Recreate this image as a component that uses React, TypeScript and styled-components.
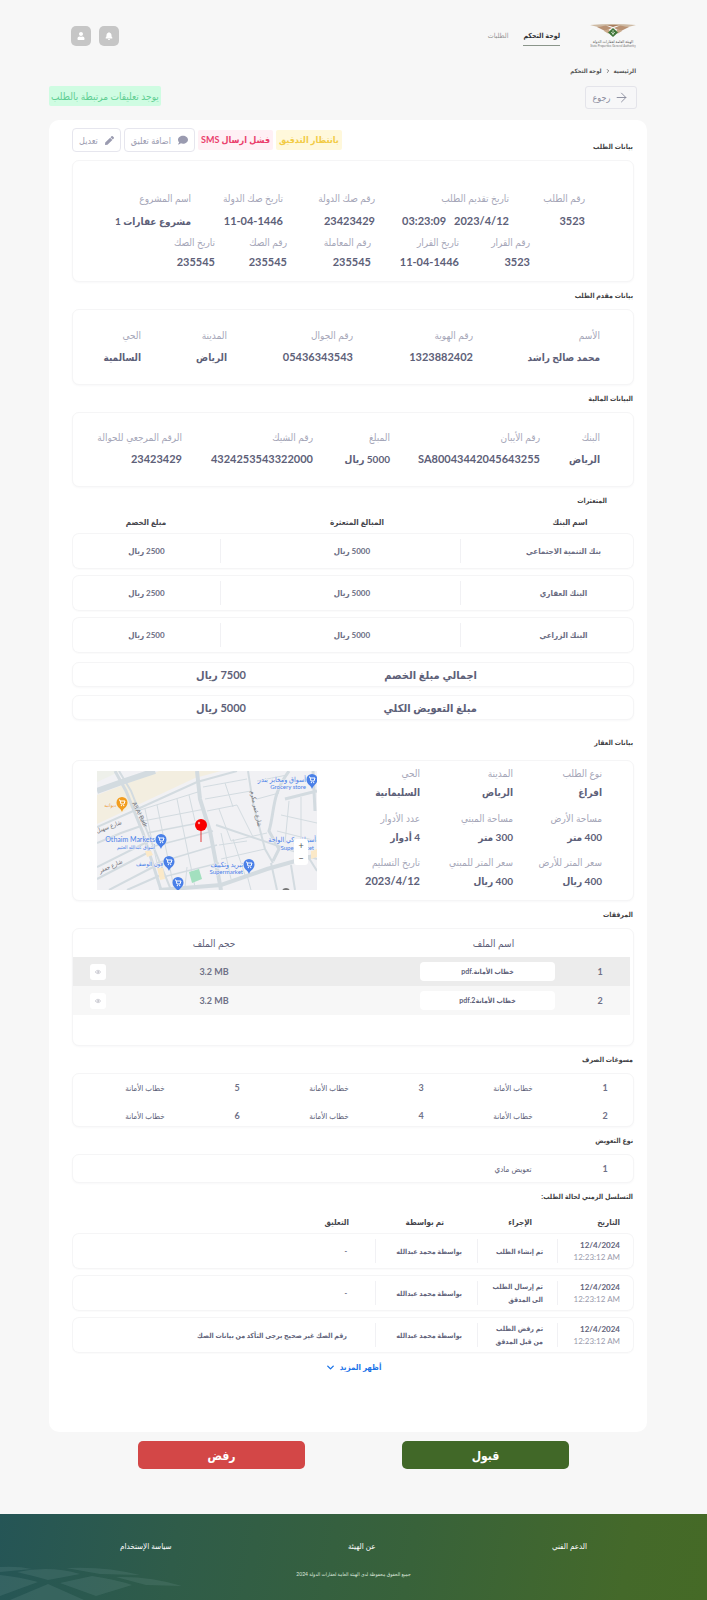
import React from "react";
import styled, { createGlobalStyle } from "styled-components";
import { FaPen, FaComment, FaBell, FaUser } from "react-icons/fa";
import { ArrowRight, ChevronDown, ChevronRight, Eye } from "lucide-react";

const Global = createGlobalStyle`
  *, *::before, *::after { box-sizing: border-box; }
  body {
    margin: 0;
    background: #f7f7f7;
    color: #5d6078;
    font-family: Lato, "DejaVu Sans Condensed", "DejaVu Sans", sans-serif;
    font-size: 9px;
    line-height: 12px;
  }
  button { font-family: inherit; cursor: pointer; }
  a { color: inherit; text-decoration: none; }
  h2, p, dl, dd, figure { margin: 0; padding: 0; }
`;

const Header = styled.header`
  display: flex;
  align-items: center;
  padding: 23px 71px 0;
  height: 48px;
`;

const LogoLink = styled.a`
  display: block;
  width: 46px;
  height: 24px;
`;

const Nav = styled.nav`
  display: flex;
  gap: 15px;
  margin-inline-start: 30px;
  margin-inline-end: auto;
  align-items: flex-start;
`;

const NavLink = styled.a<{ $active?: boolean }>`
  font-size: 7px;
  line-height: 12px;
  padding: 3px 0 4px;
  font-weight: ${(p) => (p.$active ? 700 : 400)};
  color: ${(p) => (p.$active ? "#2f3236" : "#929292")};
  border-bottom: 1px solid ${(p) => (p.$active ? "#8a958a" : "transparent")};
`;

const HeaderIcons = styled.div`
  display: flex;
  gap: 8px;
`;

const IconButton = styled.button`
  display: grid;
  place-items: center;
  width: 20px;
  height: 20px;
  padding: 0;
  border: 0;
  border-radius: 5px;
  background: #c6c6c6;
  color: #fff;
`;

const Breadcrumb = styled.nav`
  display: flex;
  align-items: center;
  gap: 3px;
  margin-top: 17px;
  padding: 0 71px;
  font-size: 6px;
  line-height: 12px;
  font-weight: 700;
  color: #555;
`;

const Toolbar = styled.div`
  display: flex;
  justify-content: space-between;
  align-items: flex-start;
  margin: 9px 70px 11px 49px;
`;

const BackButton = styled.button`
  display: flex;
  align-items: center;
  justify-content: center;
  gap: 4px;
  width: 52px;
  height: 23px;
  padding: 0;
  border: 1px solid #e4e4ea;
  border-radius: 3px;
  background: #f7f7f8;
  color: #8b8d9e;
  font-size: 9px;
`;

const Notice = styled.p`
  padding: 0 2px;
  border-radius: 2px;
  background: #cffce2;
  color: #5fce92;
  font-size: 10px;
  line-height: 20px;
`;

const Panel = styled.main`
  margin: 0 60px 0 49px;
  padding: 8px 13px 59px 23px;
  border-radius: 10px;
  background: #fff;
`;

const PanelHead = styled.div`
  display: flex;
  justify-content: space-between;
  align-items: flex-end;
  margin-bottom: 8px;
`;

const Chips = styled.div`
  display: flex;
  align-items: center;
  gap: 3px;
`;

const Chip = styled.span<{ $tone: "amber" | "pink" }>`
  padding: 0 3px;
  border-radius: 2px;
  font-size: 9px;
  font-weight: 700;
  line-height: 20px;
  background: ${(p) => (p.$tone === "amber" ? "#fff8db" : "#fff0f5")};
  color: ${(p) => (p.$tone === "amber" ? "#f2cb45" : "#ea3f6c")};
`;

const OutlineButton = styled.button`
  display: flex;
  align-items: center;
  gap: 7px;
  height: 24px;
  padding: 0 6px;
  border: 1px solid #e6e6ee;
  border-radius: 4px;
  background: #fff;
  color: #9a9bb0;
  font-size: 9px;
`;

const SectionTitle = styled.h2<{ $top?: number; $bottom?: number; $inset?: number }>`
  margin-top: ${(p) => p.$top ?? 7}px;
  margin-bottom: ${(p) => p.$bottom ?? 8}px;
  padding-inline-start: ${(p) => p.$inset ?? 1}px;
  font-size: 7px;
  line-height: 12px;
  font-weight: 700;
  color: #3f3f44;
`;

const Card = styled.section`
  border: 1px solid #f5f5f6;
  border-radius: 7px;
  background: #fff;
  box-shadow: 0 1px 2px rgba(30, 30, 60, 0.03);
  overflow: hidden;
`;

const FieldCard = styled(Card)<{ $pad: string }>`
  display: grid;
  row-gap: 5px;
  padding: ${(p) => p.$pad};
`;

const FieldRow = styled.dl<{ $cols: string; $inset?: number }>`
  display: grid;
  grid-template-columns: ${(p) => p.$cols};
  padding-inline-start: ${(p) => p.$inset ?? 0}px;
`;

const FieldLabel = styled.dt`
  font-size: 10px;
  line-height: 16px;
  color: #a5a6b8;
  white-space: nowrap;
`;

const FieldValue = styled.dd<{ $gap: number; $arabic: boolean }>`
  && { margin-top: ${(p) => p.$gap}px; }
  font-size: ${(p) => (p.$arabic ? 10 : 11)}px;
  line-height: 16px;
  font-weight: 700;
  white-space: nowrap;
`;

const RowTable = styled.table`
  width: 100%;
  margin-bottom: -5px;
  border-collapse: separate;
  border-spacing: 0 6px;
  table-layout: fixed;

  th {
    padding: 5px 0 0;
    font-size: 8px;
    line-height: 10px;
    font-weight: 700;
    color: #43434a;
  }
  td {
    height: 36px;
    padding-top: 0;
    padding-bottom: 0;
    border: 0 solid #f5f5f6;
    border-width: 1px 0;
    box-shadow: 0 1px 1px rgba(30, 30, 60, 0.02);
    background: linear-gradient(#f1f1f4, #f1f1f4) left center / 1px 24px no-repeat;
  }
  td:first-child { border-right-width: 1px; border-radius: 0 7px 7px 0; }
  td:last-child { border-left-width: 1px; border-radius: 7px 0 0 7px; background: none; }
`;

const BankTable = styled(RowTable)`
  th, td { text-align: center; padding-right: 0; padding-left: 0; }
  th:nth-child(1) { padding-left: 46px; }
  td:nth-child(1) { padding-left: 34px; }
  th:nth-child(2) { padding-left: 34px; }
  td:nth-child(2) { padding-left: 24px; }
  td { font-size: 8px; font-weight: 700; color: #6a6c82; }
`;

const TotalRow = styled(Card)`
  display: grid;
  grid-template-columns: 156fr 231fr 173fr;
  margin-top: 8px;
  font-size: 11px;
  line-height: 23px;
  font-weight: 700;

  & > :first-child { grid-column: 2; }
`;

const PropertyCard = styled(Card)`
  display: grid;
  grid-template-columns: 285fr 220fr;
  padding: 4px 31px 10px 24px;
`;

const PropertyFields = styled.div`
  display: grid;
  row-gap: 9px;
`;

const MapFrame = styled.figure`
  position: relative;
  && { margin-top: 6px; }
  height: 119px;
  overflow: hidden;

  svg { display: block; width: 100%; height: 100%; }
`;

const ZoomControls = styled.div`
  position: absolute;
  right: 9px;
  bottom: 25px;
  display: flex;
  flex-direction: column;
  width: 14px;
  border-radius: 3px;
  background: #fff;
`;

const ZoomButton = styled.button`
  height: 13px;
  padding: 0;
  border: 0;
  background: transparent;
  color: #555;
  font-size: 9px;
  line-height: 13px;
`;

const FilesCard = styled(Card)`
  padding: 0 3px 30px 0;
`;

const FilesTable = styled.table`
  width: 100%;
  table-layout: fixed;
  border-collapse: collapse;

  th, td { padding: 0; text-align: center; }
  th { height: 28px; font-size: 10px; font-weight: 400; color: #5d6078; }
  td { height: 29px; font-size: 9px; font-weight: 700; color: #6f7187; }
  th:nth-child(2) { padding-left: 12px; }
  th:nth-child(3), td:nth-child(3) { padding-right: 102px; }
  tbody tr:nth-child(odd) { background: #ececec; }
  tbody tr:nth-child(even) { background: #f7f7f7; }
`;

const FileLink = styled.a`
  display: block;
  margin: 0 15px;
  border-radius: 4px;
  background: #fff;
  font-size: 7px;
  line-height: 19px;
  color: #5d6078;
`;

const ViewButton = styled.button`
  display: inline-grid;
  place-items: center;
  width: 16px;
  height: 16px;
  padding: 0;
  border: 0;
  border-radius: 3px;
  background: #fff;
  color: #a9a9b4;
  vertical-align: middle;
`;

const NumberedCard = styled(Card)<{ $rows: number }>`
  display: grid;
  grid-template-columns: repeat(3, 184fr) 8fr;
  grid-template-rows: repeat(${(p) => p.$rows}, 16px);
  row-gap: 12px;
  padding: 6px 0 ${(p) => (p.$rows > 1 ? 2 : 5)}px;
`;

const NumberedItem = styled.div<{ $row: number; $col: number }>`
  grid-row: ${(p) => p.$row};
  grid-column: ${(p) => p.$col};
  display: grid;
  grid-template-columns: 56fr 128fr;
  text-align: center;
  font-size: 8px;
  line-height: 16px;

  b { font-size: 9px; font-weight: 700; color: #6f7187; }
`;

const TimelineTable = styled(RowTable)`
  th, td { text-align: right; padding-left: 0; }
  th:nth-child(1) { padding-right: 14px; }
  th:nth-child(2) { padding-right: 25px; }
  th:nth-child(3) { padding-right: 33px; }
  th:nth-child(4) { padding-right: 26px; }
  td:nth-child(1) { padding-right: 13px; }
  td:nth-child(2) { padding-right: 14px; }
  td:nth-child(3) { padding-right: 15px; }
  td:nth-child(4) { padding-right: 28px; }
  td { font-size: 7px; font-weight: 700; line-height: 13px; color: #62647b; }
`;

const When = styled.time`
  display: block;
  font-size: 8px;
  line-height: 12px;

  span { display: block; font-weight: 400; color: #9a9bac; }
`;

const ShowMore = styled.button`
  display: flex;
  align-items: center;
  gap: 4px;
  margin: 7px auto 0;
  padding: 0;
  border: 0;
  background: none;
  color: #1a73e8;
  font-size: 8px;
  line-height: 12px;
  font-weight: 700;
`;

const Actions = styled.div`
  display: flex;
  justify-content: center;
  gap: 97px;
  margin: 9px 0 45px;
`;

const ActionButton = styled.button<{ $kind: "accept" | "reject" }>`
  width: 167px;
  height: 28px;
  padding: 0;
  border: 0;
  border-radius: 5px;
  background: ${(p) => (p.$kind === "accept" ? "#416828" : "#d34747")};
  color: #fff;
  font-size: 12px;
  font-weight: 700;
`;

const Footer = styled.footer`
  position: relative;
  padding: 26px 120px 20px;
  background: linear-gradient(100deg, #255556 0%, #2f5c49 25%, #38623a 58%, #44692a 88%, #456a26 100%);
  color: #fff;
  overflow: hidden;
`;

const FooterArt = styled.svg`
  position: absolute;
  left: 0;
  bottom: 0;
  width: 190px;
  height: 34px;
`;

const FooterLinks = styled.nav`
  display: flex;
  justify-content: space-between;
  font-size: 8px;
  line-height: 12px;
`;

const Copyright = styled.p`
  && { margin-top: 16px; }
  text-align: center;
  font-size: 5px;
  line-height: 12px;
  color: #dfe8df;
`;

type Field = [label: string, value: string];

const hasArabic = (text: string) => /[\u0600-\u06ff]/.test(text);

const Fields = ({ items, cols, gap, inset }: { items: Field[]; cols: string; gap: number; inset?: number }) => (
  <FieldRow $cols={cols} $inset={inset}>
    {items.map(([label, value]) => (
      <div key={label}>
        <FieldLabel>{label}</FieldLabel>
        <FieldValue $gap={gap} $arabic={hasArabic(value)}>{value}</FieldValue>
      </div>
    ))}
  </FieldRow>
);

const Logo = () => (
  <svg viewBox="0 0 46 24" width="46" height="24" role="img" aria-label="الهيئة العامة لعقارات الدولة">
    <path d="M0 1 Q23 -1 46 1 L38 3 Q23 0 8 3Z" fill="#cdb9a2" />
    <path d="M7 3 L16 1.500 L22 4 L15 7Z M39 3 L30 1.500 L24 4 L31 7Z" fill="#b99274" />
    <path d="M14 7 L19 5 L20 9 L18 9.500Z M32 7 L27 5 L26 9 L28 9.500Z" fill="#c8a888" />
    <path d="M17 1 L23 3 L29 1Z" fill="#a87c5c" />
    <path d="M23 4 L28 8.500 L23 13 L18 8.500Z" fill="#3f7538" />
    <path d="M23 6 V11 M21 8 L23 10 L25 8" stroke="#e4eede" strokeWidth="0.7" fill="none" />
    <text x="23" y="19" textAnchor="middle" direction="rtl" fontSize="4" fill="#555">الهيئة العامة لعقارات الدولة</text>
    <text x="23" y="22.500" textAnchor="middle" direction="ltr" fontSize="3" fill="#777">State Properties General Authority</text>
  </svg>
);

const Pin = ({ x, y, color = "#4a80e8" }: { x: number; y: number; color?: string }) => (
  <g transform={`translate(${x} ${y})`}>
    <path d="M0 8 C-1 4 -5.500 3.500 -5.500 -1.500 A5.500 5.500 0 0 1 5.500 -1.500 C5.500 3.500 1 4 0 8Z" fill={color} />
    <path d="M-3 -4 H-2 L-1 0 H2 L3 -3 H-1.500" fill="none" stroke="#fff" strokeWidth="1" />
    <circle cx="-0.600" cy="1.600" r="0.700" fill="#fff" />
    <circle cx="1.700" cy="1.600" r="0.700" fill="#fff" />
  </g>
);

const MapDrawing = () => (
  <svg viewBox="0 0 220 119" preserveAspectRatio="xMidYMid slice" role="img" aria-label="موقع العقار">
    <rect width="220" height="119" fill="#f1f1f4" />
    <path d="M0 24 L62 0 H124 L98 7 L0 53Z" fill="#f3eee0" />
    <path d="M0 0 H24 L0 11Z" fill="#eef0ea" />
    <g fill="none" stroke="#d3dbe0">
      <path d="M0 20 L22 12 L58 0" strokeWidth="6" />
      <path d="M0 56 L34 41 L100 11 L140 0" strokeWidth="2" />
      <path d="M18 0 L29 20 L46 62 L64 119" strokeWidth="3" />
      <path d="M22 0 L34 20 L50 60 L74 119" strokeWidth="2" />
      <path d="M100 0 L103 28 L113 60 L119 92 L124 119" strokeWidth="4" />
      <path d="M62 119 L124 114 L170 98 L220 84" strokeWidth="4" />
      <path d="M119 54 L220 88" strokeWidth="2" />
      <path d="M151 0 L156 32 L168 78 L176 92" strokeWidth="2" />
      <path d="M192 0 C174 24 178 40 172 60 L182 78 L176 90" strokeWidth="3" />
      <path d="M220 20 L188 28 M216 0 L218 40" strokeWidth="3" />
      <path d="M0 72 L24 62 L44 55 M0 96 L52 70 M0 108 L54 80 M12 119 L60 94 M30 119 L64 104" strokeWidth="2" />
      <path d="M174 92 L180 119 M194 94 L198 119 M210 84 L220 100" strokeWidth="2" />
      <path d="M50 62 L112 50 M54 76 L116 60 M60 92 L120 74 M66 106 L122 92" strokeWidth="1.500" />
      <path d="M40 40 L104 20 M46 50 L108 38 M60 34 L76 112 M80 28 L98 116 M48 38 L60 92 M92 24 L98 50" strokeWidth="1" />
      <path d="M106 16 L150 8 M108 28 L154 20 M110 40 L140 34 M128 12 L136 36 M140 34 L156 66 M122 38 L134 70 L170 62" strokeWidth="1" />
      <path d="M124 62 L134 108 M136 68 L148 104 M122 74 L150 70 M124 88 L168 78 M160 10 L190 4 M160 28 L182 22" strokeWidth="1" />
      <path d="M184 44 L220 52 M180 60 L220 70 M192 30 L188 72 M204 26 L204 78 M150 104 L154 119 M90 96 L88 116" strokeWidth="1" />
    </g>
    <path d="M92 101 L102 98 L105 108 L95 112Z" fill="#a3e0bf" />
    <path d="M214 80 L220 78 V86 L214 88Z M48 80 L54 80 L56 84 L50 86Z M60 97 L66 97 L68 108 L63 109Z" fill="#fbe9c8" />
    <circle cx="189" cy="121" r="4" fill="#777" />
    <g fontSize="6" fill="#4a80e8" stroke="#f1f1f4" strokeWidth="1" paintOrder="stroke">
      <g direction="rtl">
        <text x="209" y="11" fontSize="7">أسواق ومخابز بندر</text>
        <text x="58" y="78" fontSize="5">أسواق عبدالله العثيم</text>
        <text x="66" y="95">فون الوصف</text>
        <text x="146" y="96" fontSize="7">تبريد وتكييف</text>
        <text x="219" y="71" fontSize="7">أسواق ركي الواحة</text>
        <text x="19" y="36" fontSize="5" fill="#ee9a28">ديوانية</text>
      </g>
      <g direction="ltr" textAnchor="end">
        <text x="209" y="18">Grocery store</text>
        <text x="58" y="71" fontSize="7">Othaim Markets</text>
        <text x="146" y="103">Supermarket</text>
        <text x="217" y="79">Supermarket</text>
      </g>
    </g>
    <g fontSize="6" fill="#6f6f74">
      <text transform="translate(35 32) rotate(64)" direction="ltr">Ali Al Badr</text>
      <text transform="translate(25 53) rotate(-20)" direction="rtl">شارع سهيل</text>
      <text transform="translate(26 92) rotate(-24)" direction="rtl">شارع جعفر</text>
      <text transform="translate(161 56) rotate(78)" direction="rtl">شارع عمر مكرم</text>
    </g>
    <Pin x={25} y={33} color="#f29d1f" />
    <Pin x={64} y={70} />
    <Pin x={72} y={92} />
    <Pin x={81} y={113} />
    <Pin x={152} y={95} />
    <Pin x={215} y={10} />
    <path d="M104 55 V71" stroke="#e23c3c" strokeWidth="1" />
    <circle cx="104" cy="54" r="6" fill="#f80000" />
    <circle cx="102" cy="52" r="1.200" fill="#ff9c9c" />
  </svg>
);

const banks = ["بنك التنمية الاجتماعي", "البنك العقاري", "البنك الزراعي"];
const files = ["خطاب الأمانة.pdf", "خطاب الأمانة2.pdf"];
const propertyCols = "89fr 93fr 103fr";
const events = [
  { action: ["تم إنشاء الطلب"], by: "بواسطة محمد عبدالله", note: "-" },
  { action: ["تم إرسال الطلب", "الى المدقق"], by: "بواسطة محمد عبدالله", note: "-" },
  {
    action: ["تم رفض الطلب", "من قبل المدقق"],
    by: "بواسطة محمد عبدالله",
    note: "رقم الصك غير صحيح يرجى التأكد من بيانات الصك",
  },
];

export default function App() {
  return (
    <div dir="rtl" lang="ar">
      <Global />
      <Header>
        <LogoLink href="#home"><Logo /></LogoLink>
        <Nav>
          <NavLink href="#dashboard" $active>لوحة التحكم</NavLink>
          <NavLink href="#requests">الطلبات</NavLink>
        </Nav>
        <HeaderIcons>
          <IconButton aria-label="الإشعارات"><FaBell size={8} /></IconButton>
          <IconButton aria-label="الحساب"><FaUser size={8} /></IconButton>
        </HeaderIcons>
      </Header>
      <Breadcrumb aria-label="مسار التنقل">
        <a href="#home">الرئيسية</a>
        <ChevronRight size={6} strokeWidth={3} />
        <a href="#dashboard">لوحة التحكم</a>
      </Breadcrumb>
      <Toolbar>
        <BackButton><ArrowRight size={15} strokeWidth={1.5} />رجوع</BackButton>
        <Notice>يوجد تعليقات مرتبطة بالطلب</Notice>
      </Toolbar>

      <Panel>
        <PanelHead>
          <SectionTitle $top={0} $bottom={0}>بيانات الطلب</SectionTitle>
          <Chips>
            <Chip $tone="amber">بانتظار التدقيق</Chip>
            <Chip $tone="pink">فشل ارسال SMS</Chip>
            <OutlineButton><FaComment size={10} />اضافة تعليق</OutlineButton>
            <OutlineButton><FaPen size={9} />تعديل</OutlineButton>
          </Chips>
        </PanelHead>
        <FieldCard $pad="29px 48px 11px 0">
          <Fields
            cols="76fr 134fr 92fr 92fr 118fr"
            gap={7}
            items={[
              ["رقم الطلب", "3523"],
              ["تاريخ تقديم الطلب", "2023/4/12\u00a0\u00a0 03:23:09"],
              ["رقم صك الدولة", "23423429"],
              ["تاريخ صك الدولة", "11-04-1446"],
              ["اسم المشروع", "مشروع عقارات 1"],
            ]}
          />
          <Fields
            cols="71fr 88fr 84fr 72fr 142fr"
            gap={4}
            inset={55}
            items={[
              ["رقم القرار", "3523"],
              ["تاريخ القرار", "11-04-1446"],
              ["رقم المعاملة", "235545"],
              ["رقم الصك", "235545"],
              ["تاريخ الصك", "235545"],
            ]}
          />
        </FieldCard>

        <SectionTitle>بيانات مقدم الطلب</SectionTitle>
        <FieldCard $pad="17px 33px 19px 0">
          <Fields
            cols="127fr 120fr 126fr 86fr 68fr"
            gap={6}
            items={[
              ["الأسم", "محمد صالح راشد"],
              ["رقم الهوية", "1323882402"],
              ["رقم الجوال", "05436343543"],
              ["المدينة", "الرياض"],
              ["الحي", "السالمية"],
            ]}
          />
        </FieldCard>

        <SectionTitle>البيانات المالية</SectionTitle>
        <FieldCard $pad="16px 33px 19px 0">
          <Fields
            cols="60fr 150fr 77fr 131fr 109fr"
            gap={6}
            items={[
              ["البنك", "الرياض"],
              ["رقم الأيبان", "SA80043442045643255"],
              ["المبلغ", "5000 ريال"],
              ["رقم الشيك", "4324253543322000"],
              ["الرقم المرجعي للحوالة", "23423429"],
            ]}
          />
        </FieldCard>

        <SectionTitle $bottom={0} $inset={27}>المتعثرات</SectionTitle>
        <BankTable>
          <colgroup>
            <col width="174" />
            <col width="240" />
            <col width="148" />
          </colgroup>
          <thead>
            <tr>
              <th>اسم البنك</th>
              <th>المبالغ المتعثرة</th>
              <th>مبلغ الخصم</th>
            </tr>
          </thead>
          <tbody>
            {banks.map((name) => (
              <tr key={name}>
                <td>{name}</td>
                <td>5000 ريال</td>
                <td>2500 ريال</td>
              </tr>
            ))}
          </tbody>
        </BankTable>
        <TotalRow><span>اجمالي مبلغ الخصم</span><span>7500 ريال</span></TotalRow>
        <TotalRow><span>مبلغ التعويض الكلي</span><span>5000 ريال</span></TotalRow>

        <SectionTitle $top={16} $bottom={12}>بيانات العقار</SectionTitle>
        <PropertyCard>
          <PropertyFields>
            <Fields
              cols={propertyCols}
              gap={3}
              items={[["نوع الطلب", "افراغ"], ["المدينة", "الرياض"], ["الحي", "السليمانية"]]}
            />
            <Fields
              cols={propertyCols}
              gap={3}
              items={[["مساحة الأرض", "400 متر"], ["مساحة المبني", "300 متر"], ["عدد الأدوار", "4 أدوار"]]}
            />
            <Fields
              cols={propertyCols}
              gap={3}
              items={[["سعر المتر للأرض", "400 ريال"], ["سعر المتر للمبني", "400 ريال"], ["تاريخ التسليم", "2023/4/12"]]}
            />
          </PropertyFields>
          <MapFrame>
            <MapDrawing />
            <ZoomControls>
              <ZoomButton aria-label="تكبير">+</ZoomButton>
              <ZoomButton aria-label="تصغير">−</ZoomButton>
            </ZoomControls>
          </MapFrame>
        </PropertyCard>

        <SectionTitle>المرفقات</SectionTitle>
        <FilesCard>
          <FilesTable>
            <colgroup>
              <col width="60" />
              <col width="165" />
              <col width="280" />
              <col width="54" />
            </colgroup>
            <thead>
              <tr>
                <th />
                <th>اسم الملف</th>
                <th>حجم الملف</th>
                <th />
              </tr>
            </thead>
            <tbody>
              {files.map((file, i) => (
                <tr key={file}>
                  <td>{i + 1}</td>
                  <td><FileLink href={`#file-${i + 1}`}>{file}</FileLink></td>
                  <td><span dir="ltr">3.2 MB</span></td>
                  <td><ViewButton aria-label="عرض"><Eye size={6} /></ViewButton></td>
                </tr>
              ))}
            </tbody>
          </FilesTable>
        </FilesCard>

        <SectionTitle>مسوغات الصرف</SectionTitle>
        <NumberedCard $rows={2}>
          {[1, 2, 3, 4, 5, 6].map((n) => (
            <NumberedItem key={n} $row={n % 2 ? 1 : 2} $col={Math.ceil(n / 2)}>
              <b>{n}</b>
              <span>خطاب الأمانة</span>
            </NumberedItem>
          ))}
        </NumberedCard>

        <SectionTitle>نوع التعويض</SectionTitle>
        <NumberedCard $rows={1}>
          <NumberedItem $row={1} $col={1}>
            <b>1</b>
            <span>تعويض مادي</span>
          </NumberedItem>
        </NumberedCard>

        <SectionTitle $bottom={4}>التسلسل الزمني لحالة الطلب:</SectionTitle>
        <TimelineTable>
          <colgroup>
            <col width="77" />
            <col width="80" />
            <col width="102" />
            <col width="303" />
          </colgroup>
          <thead>
            <tr>
              <th>التاريخ</th>
              <th>الإجراء</th>
              <th>تم بواسطة</th>
              <th>التعليق</th>
            </tr>
          </thead>
          <tbody>
            {events.map((e) => (
              <tr key={e.action[0]}>
                <td><When>12/4/2024<span><bdi dir="ltr">12:23:12 AM</bdi></span></When></td>
                <td>{e.action.map((line) => <div key={line}>{line}</div>)}</td>
                <td>{e.by}</td>
                <td>{e.note}</td>
              </tr>
            ))}
          </tbody>
        </TimelineTable>
        <ShowMore>أظهر المزيد<ChevronDown size={11} strokeWidth={3} /></ShowMore>
      </Panel>

      <Actions>
        <ActionButton $kind="accept">قبول</ActionButton>
        <ActionButton $kind="reject">رفض</ActionButton>
      </Actions>

      <Footer>
        <FooterArt viewBox="0 0 190 34" aria-hidden="true" fill="#8fb0ac" fillOpacity="0.15">
          <path d="M0 1 Q18 0 32 3 L0 6Z M17 6 Q50 -1 80 8 L48 14 Q30 9 17 6Z M66 2 Q105 0 140 9 L100 8Z M0 9 Q20 11 38 16 L0 30Z M60 17 L92 10 Q118 14 132 19 L96 30Z M116 11 Q150 10 182 20 L146 19Z M10 34 L48 18 L84 34Z" />
        </FooterArt>
        <FooterLinks>
          <a href="#support">الدعم الفني</a>
          <a href="#about">عن الهيئة</a>
          <a href="#terms">سياسة الإستخدام</a>
        </FooterLinks>
        <Copyright>جميع الحقوق محفوظة لدى الهيئة العامة لعقارات الدولة 2024</Copyright>
      </Footer>
    </div>
  );
}
